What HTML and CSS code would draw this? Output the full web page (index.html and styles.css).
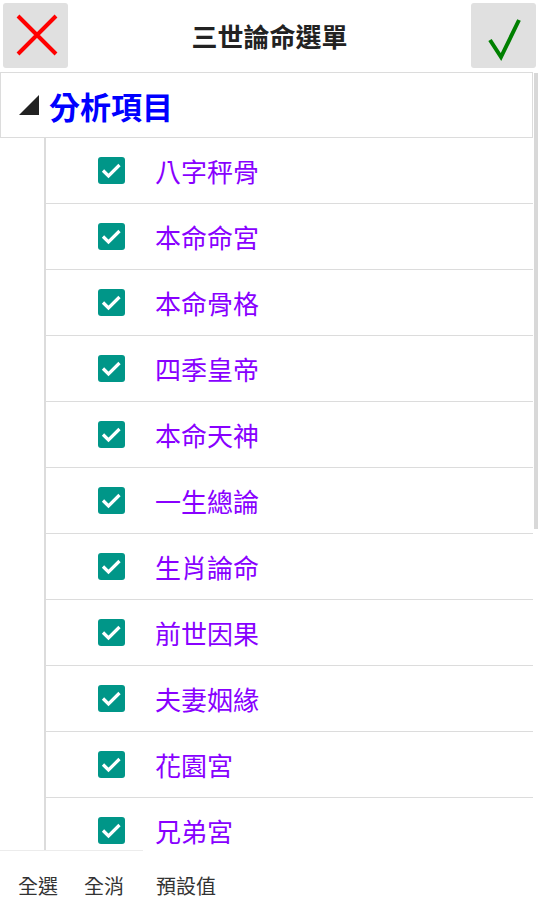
FILE: index.html
```html
<!DOCTYPE html>
<html lang="zh-Hant">
<head>
<meta charset="utf-8">
<title>三世論命選單</title>
<link rel="stylesheet" href="styles.css">
</head>
<body>
<div class="app">
  <header class="topbar">
    <button class="icon-btn" aria-label="取消">
      <svg width="64" height="64" viewBox="0 0 64 64"><path d="M14 12 L52 50 M52 12 L14 50" stroke="#ff0000" stroke-width="4" fill="none"/></svg>
    </button>
    <h1 class="title">三世論命選單</h1>
    <button class="icon-btn" aria-label="確定">
      <svg width="64" height="64" viewBox="0 0 64 64"><path d="M19 36 L30 53 L48 16" stroke="#008000" stroke-width="4" fill="none" stroke-linejoin="miter"/></svg>
    </button>
  </header>

  <main class="content">
    <div class="group-head">
      <span class="tri"></span>
      <span class="group-title">分析項目</span>
    </div>
    <ul class="list">
      <li class="row"><span class="cb"><svg width="27" height="27" viewBox="0 0 27 27"><path d="M5 13.5 L10.5 19 L21.5 8" stroke="#fff" stroke-width="3.2" fill="none"/></svg></span><span class="label">八字秤骨</span></li>
      <li class="row"><span class="cb"><svg width="27" height="27" viewBox="0 0 27 27"><path d="M5 13.5 L10.5 19 L21.5 8" stroke="#fff" stroke-width="3.2" fill="none"/></svg></span><span class="label">本命命宮</span></li>
      <li class="row"><span class="cb"><svg width="27" height="27" viewBox="0 0 27 27"><path d="M5 13.5 L10.5 19 L21.5 8" stroke="#fff" stroke-width="3.2" fill="none"/></svg></span><span class="label">本命骨格</span></li>
      <li class="row"><span class="cb"><svg width="27" height="27" viewBox="0 0 27 27"><path d="M5 13.5 L10.5 19 L21.5 8" stroke="#fff" stroke-width="3.2" fill="none"/></svg></span><span class="label">四季皇帝</span></li>
      <li class="row"><span class="cb"><svg width="27" height="27" viewBox="0 0 27 27"><path d="M5 13.5 L10.5 19 L21.5 8" stroke="#fff" stroke-width="3.2" fill="none"/></svg></span><span class="label">本命天神</span></li>
      <li class="row"><span class="cb"><svg width="27" height="27" viewBox="0 0 27 27"><path d="M5 13.5 L10.5 19 L21.5 8" stroke="#fff" stroke-width="3.2" fill="none"/></svg></span><span class="label">一生總論</span></li>
      <li class="row"><span class="cb"><svg width="27" height="27" viewBox="0 0 27 27"><path d="M5 13.5 L10.5 19 L21.5 8" stroke="#fff" stroke-width="3.2" fill="none"/></svg></span><span class="label">生肖論命</span></li>
      <li class="row"><span class="cb"><svg width="27" height="27" viewBox="0 0 27 27"><path d="M5 13.5 L10.5 19 L21.5 8" stroke="#fff" stroke-width="3.2" fill="none"/></svg></span><span class="label">前世因果</span></li>
      <li class="row"><span class="cb"><svg width="27" height="27" viewBox="0 0 27 27"><path d="M5 13.5 L10.5 19 L21.5 8" stroke="#fff" stroke-width="3.2" fill="none"/></svg></span><span class="label">夫妻姻緣</span></li>
      <li class="row"><span class="cb"><svg width="27" height="27" viewBox="0 0 27 27"><path d="M5 13.5 L10.5 19 L21.5 8" stroke="#fff" stroke-width="3.2" fill="none"/></svg></span><span class="label">花園宮</span></li>
      <li class="row"><span class="cb"><svg width="27" height="27" viewBox="0 0 27 27"><path d="M5 13.5 L10.5 19 L21.5 8" stroke="#fff" stroke-width="3.2" fill="none"/></svg></span><span class="label">兄弟宮</span></li>
    </ul>
    <div class="scrollbar"></div>
  </main>

  <footer class="footer">
    <span class="footer-edge"></span>
    <button class="text-btn btn-all">全選</button>
    <button class="text-btn btn-none">全消</button>
    <button class="text-btn btn-default">預設值</button>
  </footer>
</div>
</body>
</html>
```

FILE: styles.css
```css
* { box-sizing: border-box; }
html, body {
  margin: 0;
  padding: 0;
  background: #fff;
  font-family: "Noto Sans CJK TC", "Noto Sans", sans-serif;
}
.app {
  position: relative;
  width: 540px;
  height: 922px;
  overflow: hidden;
}
.topbar {
  height: 72px;
  display: flex;
  align-items: flex-start;
  justify-content: space-between;
  padding: 3px 4px 0 3px;
}
.icon-btn {
  width: 65px;
  height: 65px;
  padding: 0;
  border: none;
  border-radius: 3px;
  background: #e0e0e0;
  display: flex;
  align-items: center;
  justify-content: center;
}
.title {
  margin: 0;
  font-size: 26px;
  font-weight: bold;
  color: #222;
  line-height: 66px;
}
.content {
  position: relative;
}
.group-head {
  width: 533px;
  height: 66px;
  border: 1px solid #dcdcdc;
  display: flex;
  align-items: center;
  padding-left: 18px;
}
.tri {
  width: 20px;
  height: 20px;
  background: #222;
  clip-path: polygon(100% 0, 100% 100%, 0 100%);
  margin-right: 10px;
}
.group-title {
  color: #0000ff;
  font-size: 31px;
  font-weight: bold;
  line-height: 1;
}
.list {
  list-style: none;
  margin: 0 0 0 44px;
  padding: 0;
  width: 489px;
  border-left: 2px solid #dcdcdc;
}
.row {
  height: 66px;
  display: flex;
  align-items: center;
  border-bottom: 1px solid #dcdcdc;
  padding-left: 52px;
}
.cb {
  width: 27px;
  height: 27px;
  background: #009688;
  border-radius: 3px;
  display: flex;
  margin-right: 30px;
}
.label {
  color: #8800ff;
  font-size: 26px;
  line-height: 1;
}
.scrollbar {
  position: absolute;
  top: 1px;
  right: 2px;
  width: 4px;
  height: 456px;
  background: #d8d8d8;
}
.footer {
  position: absolute;
  left: 0;
  bottom: 0;
  width: 540px;
  height: 72px;
  background: #fff;
  display: flex;
  align-items: center;
  padding-left: 18px;
}
.footer-edge {
  position: absolute;
  left: 0;
  top: 0;
  width: 143px;
  height: 1px;
  background: #ececec;
}
.text-btn {
  border: none;
  background: none;
  padding: 0;
  font-family: inherit;
  font-size: 20px;
  color: #333;
  line-height: 1;
}
.btn-none { margin-left: 26px; }
.btn-default { margin-left: 32px; }
```
